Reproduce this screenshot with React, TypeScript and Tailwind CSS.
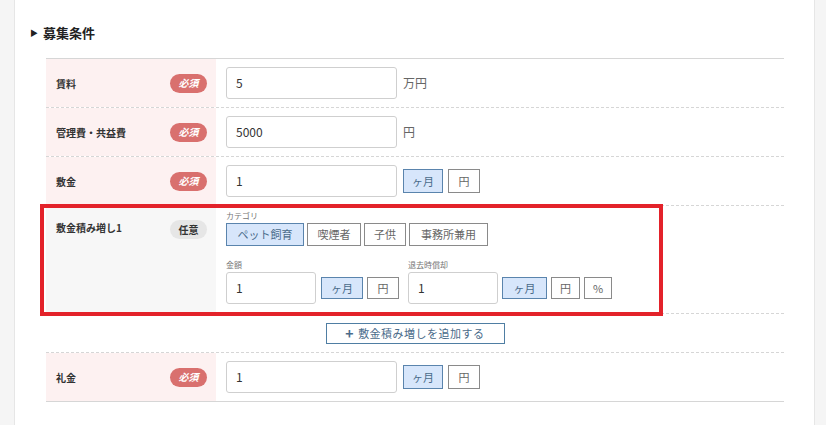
import React from "react";

const font = { fontFamily: '"Noto Sans CJK JP", "Noto Sans", sans-serif' };

function Badge({ req }: { req: boolean }) {
  return req ? (
    <span className="inline-flex items-center justify-center w-[37px] h-[19px] rounded-full bg-[#d9706e] text-white text-[10px] font-bold italic leading-none">
      必須
    </span>
  ) : (
    <span className="inline-flex items-center justify-center w-[37px] h-[19px] rounded-full bg-[#e6e6e6] text-[#333] text-[10px] font-bold leading-none">
      任意
    </span>
  );
}

function Input({ value, w }: { value: string; w: string }) {
  return (
    <div className={`${w} h-[32px] border border-[#cfcfcf] rounded-[3px] bg-white flex items-center px-[9px] text-[12px] text-[#333]`}>
      {value}
    </div>
  );
}

function Tog({ label, on, w, h = "h-[24px]" }: { label: string; on?: boolean; w: string; h?: string }) {
  return (
    <div
      className={`${w} ${h} flex items-center justify-center text-[11px] border ${
        on ? "bg-[#d7e6fb] border-[#5a84ad] text-[#4a6b8a]" : "bg-white border-[#8a8a8a] text-[#666]"
      }`}
    >
      {label}
    </div>
  );
}

function Row({
  label,
  req,
  children,
  border = "border-b border-dashed border-[#d6d6d6]",
}: {
  label: string;
  req: boolean;
  children: React.ReactNode;
  border?: string;
}) {
  return (
    <div className={`flex h-[49px] ${border}`}>
      <div className="w-[170px] bg-[#fdf1f1] flex items-center justify-between pl-[10px] pr-[9px]">
        <span className="text-[10px] font-bold text-[#333]">{label}</span>
        <Badge req={req} />
      </div>
      <div className="flex-1 flex items-center pl-[10px] gap-[6px]">{children}</div>
    </div>
  );
}

export default function App() {
  return (
    <div style={font} className="w-[826px] h-[425px] flex bg-white overflow-hidden">
      <div className="w-[15px] bg-[#f5f5f5] border-r border-[#e6e6e6]" />
      <div className="flex-1 pt-[24px]">
        <div className="flex items-center gap-[5px] pl-[15px] h-[18px]">
          <span className="text-[8px] text-[#222]">▶</span>
          <span className="text-[13px] font-bold text-[#222]">募集条件</span>
        </div>
        <div className="ml-[31px] mr-[30px] mt-[16px] border-t border-[#d6d6d6]">
          <Row label="賃料" req>
            <Input value="5" w="w-[171px]" />
            <span className="text-[12px] text-[#666]">万円</span>
          </Row>
          <Row label="管理費・共益費" req>
            <Input value="5000" w="w-[171px]" />
            <span className="text-[12px] text-[#666]">円</span>
          </Row>
          <Row label="敷金" req>
            <Input value="1" w="w-[171px]" />
            <div className="flex gap-[5px]">
              <Tog label="ヶ月" on w="w-[40px]" />
              <Tog label="円" w="w-[32px]" />
            </div>
          </Row>
          <div className="relative flex h-[108px] border-b border-dashed border-[#d6d6d6]">
            <div className="w-[170px] bg-[#f7f7f7] flex items-start justify-between pl-[10px] pr-[9px] pt-[14px]">
              <span className="text-[10px] font-bold text-[#333]">敷金積み増し1</span>
              <Badge req={false} />
            </div>
            <div className="flex-1 pl-[10px] pt-[4px]">
              <div className="text-[8px] text-[#777] leading-[12px]">カテゴリ</div>
              <div className="flex gap-[3px] mt-[1px]">
                <Tog label="ペット飼育" on w="w-[78px]" h="h-[23px]" />
                <Tog label="喫煙者" w="w-[54px]" h="h-[23px]" />
                <Tog label="子供" w="w-[42px]" h="h-[23px]" />
                <Tog label="事務所兼用" w="w-[79px]" h="h-[23px]" />
              </div>
              <div className="flex mt-[13px]">
                <div>
                  <div className="text-[8px] text-[#777] leading-[12px]">金額</div>
                  <div className="flex items-center gap-[5px] mt-[1px]">
                    <Input value="1" w="w-[90px]" />
                    <div className="flex gap-[4px]">
                      <Tog label="ヶ月" on w="w-[42px]" h="h-[22px]" />
                      <Tog label="円" w="w-[32px]" h="h-[22px]" />
                    </div>
                  </div>
                </div>
                <div className="ml-[9px]">
                  <div className="text-[8px] text-[#777] leading-[12px]">退去時償却</div>
                  <div className="flex items-center gap-[4px] mt-[1px]">
                    <Input value="1" w="w-[90px]" />
                    <div className="flex gap-[4px]">
                      <Tog label="ヶ月" on w="w-[45px]" h="h-[22px]" />
                      <Tog label="円" w="w-[29px]" h="h-[22px]" />
                      <Tog label="%" w="w-[28px]" h="h-[22px]" />
                    </div>
                  </div>
                </div>
              </div>
            </div>
            <div className="absolute left-[-6px] top-[-2px] w-[623px] h-[112px] border-[4px] border-[#e3222a] pointer-events-none" />
          </div>
          <div className="h-[39px] flex items-center justify-center border-b border-dashed border-[#d6d6d6]">
            <div className="w-[179px] h-[21px] border border-[#4f7ea3] flex items-center justify-center gap-[4px] text-[11px] text-[#4a6b8a] tracking-[0.5px]">
              <span className="text-[14px] font-bold leading-none">+</span>
              <span>敷金積み増しを追加する</span>
            </div>
          </div>
          <Row label="礼金" req border="border-b border-[#d6d6d6]">
            <Input value="1" w="w-[171px]" />
            <div className="flex gap-[5px]">
              <Tog label="ヶ月" on w="w-[40px]" />
              <Tog label="円" w="w-[32px]" />
            </div>
          </Row>
        </div>
      </div>
      <div className="w-[12px] bg-[#f5f5f5] border-l border-[#e6e6e6]" />
    </div>
  );
}
